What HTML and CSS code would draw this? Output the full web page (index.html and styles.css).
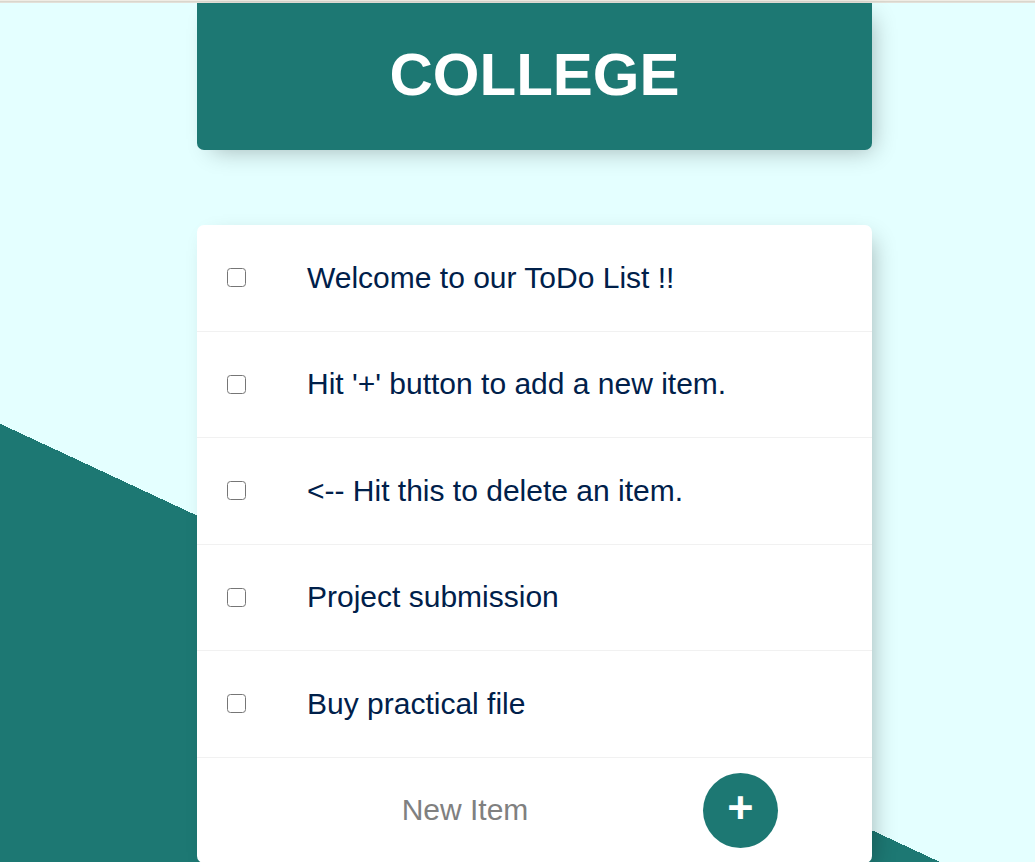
FILE: index.html
```html
<!DOCTYPE html>
<html lang="en">
<head>
<meta charset="utf-8">
<title>To-Do List</title>
<link rel="stylesheet" href="styles.css">
</head>
<body>
  <div class="chrome-line"></div>
  <main class="page">
    <div class="box heading">
      <h1>COLLEGE</h1>
    </div>
    <div class="box list">
      <div class="item">
        <input type="checkbox" class="check">
        <p>Welcome to our ToDo List !!</p>
      </div>
      <div class="item">
        <input type="checkbox" class="check">
        <p>Hit '+' button to add a new item.</p>
      </div>
      <div class="item">
        <input type="checkbox" class="check">
        <p>&lt;-- Hit this to delete an item.</p>
      </div>
      <div class="item">
        <input type="checkbox" class="check">
        <p>Project submission</p>
      </div>
      <div class="item">
        <input type="checkbox" class="check">
        <p>Buy practical file</p>
      </div>
      <form class="item add-form">
        <input type="text" class="new-item" placeholder="New Item" autocomplete="off">
        <button type="button" class="add-btn">+</button>
      </form>
    </div>
  </main>
</body>
</html>
```
FILE: styles.css
```css
html {
  background-color: #e4ffff;
  background-image: linear-gradient(25deg, #1d7873 50%, #e4ffff 50%);
  background-size: 100% 1330px;
  background-repeat: no-repeat;
  overflow: hidden;
}

body {
  margin: 0;
  height: 862px;
  overflow: hidden;
  font-family: "Liberation Sans", Arial, sans-serif;
}

.chrome-line {
  height: 3px;
  background: linear-gradient(#efece4 0, #efece4 1px, #d9d6cd 1px, #d9d6cd 2px, #e3e0d8 2px);
}

.page {
  padding-left: 34px;
}

.box {
  width: 675px;
  margin: 0 auto;
  box-shadow: 7.5px 7.5px 22.5px -7.5px rgba(0, 0, 0, 0.3);
}

.heading {
  background-color: #1d7873;
  border-radius: 0 0 7px 7px;
  text-align: center;
  padding: 37px 0 41px;
}

.heading h1 {
  margin: 0;
  color: #ffffff;
  font-size: 60px;
  line-height: 69px;
  font-weight: bold;
}

.list {
  margin-top: 75px;
  background: #ffffff;
  border-radius: 7px;
}

.item {
  height: 106.5px;
  box-sizing: border-box;
  display: flex;
  align-items: center;
  border-bottom: 1px solid #f1f1f1;
}

.check {
  appearance: none;
  -webkit-appearance: none;
  width: 19px;
  height: 19px;
  margin: 0 0 0 30px;
  box-sizing: border-box;
  border: 1.5px solid #767676;
  border-radius: 3.5px;
  background: #ffffff;
  flex: none;
}

.item p {
  margin: 0 0 0 61px;
  font-size: 30px;
  color: #00204a;
}

.add-form {
  height: 105px;
  border-bottom: 0;
}

.new-item {
  width: 470px;
  height: 90px;
  margin-left: 33px;
  padding: 0;
  border: none;
  background: transparent;
  text-align: center;
  font-family: "Liberation Sans", Arial, sans-serif;
  font-size: 30px;
  color: #00204a;
  outline: none;
}

.new-item::placeholder {
  color: #808080;
  opacity: 1;
}

.add-btn {
  width: 75px;
  height: 75px;
  margin-left: 3px;
  border: 0;
  border-radius: 50%;
  background-color: #1d7873;
  color: #ffffff;
  font-family: "Liberation Sans", Arial, sans-serif;
  font-size: 45px;
  font-weight: bold;
  line-height: 1;
  padding: 0 0 6px;
  display: flex;
  align-items: center;
  justify-content: center;
}
```
